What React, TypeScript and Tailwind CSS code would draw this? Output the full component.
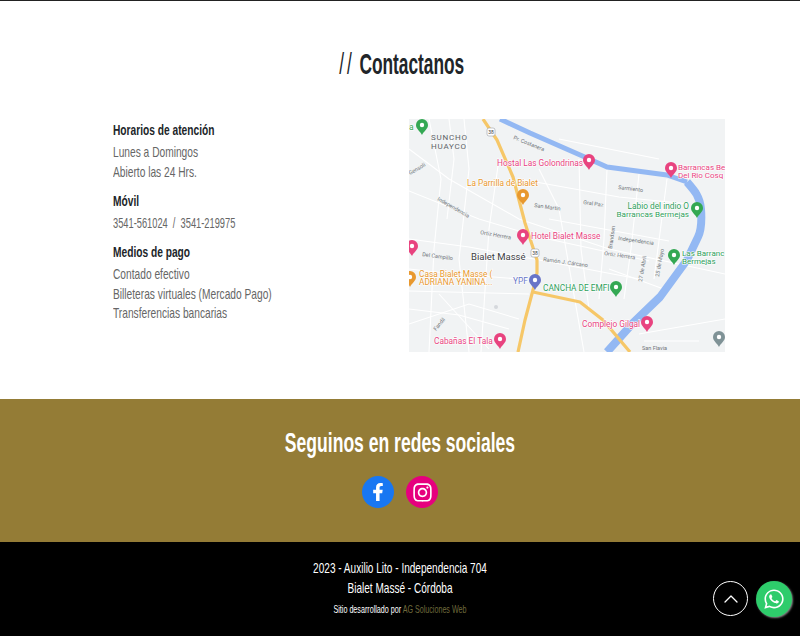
import { FaFacebookF, FaInstagram, FaWhatsapp } from 'react-icons/fa';
import { FiChevronUp } from 'react-icons/fi';

const hours = ['Lunes a Domingos', 'Abierto las 24 Hrs.'];
const payments = ['Contado efectivo', 'Billeteras virtuales (Mercado Pago)', 'Transferencias bancarias'];

const streets = [
  'M0 30 L40 60 L110 100 L200 130 L316 155',
  'M0 72 L70 100 L130 118 L240 142',
  'M0 120 L60 128 L125 140 L230 160',
  'M0 172 L120 175',
  'M20 0 L32 60 L25 130 L20 233',
  'M55 0 L60 50 L50 140 L60 233',
  'M90 40 L80 110 L72 233',
  'M130 50 L150 90 L175 233',
  'M170 40 L172 130 L180 190',
  'M198 50 L195 120 L190 180',
  'M230 55 L222 130 L215 180',
  'M258 60 L245 160',
  'M0 205 L60 185 L110 200',
  'M30 175 L80 230',
  'M110 60 L210 78 L280 85',
  'M230 215 L316 200',
  'M235 222 L290 222',
  'M0 150 L45 155 L110 160',
  'M0 190 L50 196 L100 210',
  'M40 0 L45 40 L38 100',
  'M150 20 L250 40',
  'M140 100 L260 122',
  'M200 150 L260 172',
];

const pins = [
  { x: 13, y: 6, c: '#34a853' },
  { x: 180, y: 41, c: '#e8437f' },
  { x: 262, y: 49, c: '#e8437f' },
  { x: 114, y: 76, c: '#e8982e' },
  { x: 288, y: 89, c: '#34a853' },
  { x: 114, y: 116, c: '#e8437f' },
  { x: 3, y: 127, c: '#e8437f' },
  { x: 265, y: 136, c: '#34a853' },
  { x: 1, y: 158, c: '#e8982e' },
  { x: 126, y: 161, c: '#6874c8' },
  { x: 207, y: 168, c: '#34a853' },
  { x: 238, y: 203, c: '#e8437f' },
  { x: 91, y: 220, c: '#e8437f' },
  { x: 310, y: 218, c: '#7f9296' },
];

const labels = [
  { t: 'a', x: 0, y: 11, c: '#34a853', s: 8.5 },
  { t: 'Hostal Las Golondrinas', x: 88, y: 47, c: '#e8437f', s: 8.3 },
  { t: 'Barrancas Be', x: 269, y: 51, c: '#e8437f', s: 8 },
  { t: 'Del Rio Cosq', x: 269, y: 59, c: '#e8437f', s: 8 },
  { t: 'La Parrilla de Bialet', x: 58, y: 67, c: '#e8982e', s: 8.3 },
  { t: 'Labio del indio O', x: 280, y: 90, c: '#2e9e5b', s: 8.3, end: true },
  { t: 'Barrancas Bermejas', x: 280, y: 98, c: '#2e9e5b', s: 8.1, end: true },
  { t: 'Hotel Bialet Masse', x: 122, y: 120, c: '#e8437f', s: 8.3 },
  { t: 'Las Barranc', x: 273, y: 137, c: '#2e9e5b', s: 8 },
  { t: 'Bermejas', x: 273, y: 145, c: '#2e9e5b', s: 8 },
  { t: 'Casa Bialet Masse (', x: 10, y: 158, c: '#e8982e', s: 8.3 },
  { t: 'ADRIANA YANINA...', x: 10, y: 166, c: '#e8982e', s: 8.3 },
  { t: 'YPF', x: 104, y: 165, c: '#6874c8', s: 8.3 },
  { t: 'CANCHA DE EMFI', x: 134, y: 172, c: '#2e9e5b', s: 8.3 },
  { t: 'Complejo Gilgal', x: 173, y: 208, c: '#e8437f', s: 8.3 },
  { t: 'Cabañas El Tala', x: 25, y: 225, c: '#e8437f', s: 8.3 },
  { t: 'Bialet Massé', x: 62, y: 141, c: '#3c4043', s: 9.5 },
];

const small = [
  { t: 'Pr. Costanera', x: 104, y: 20, r: 22 },
  { t: 'Gensoli', x: 1, y: 56, r: -30 },
  { t: 'Sarmiento', x: 209, y: 70, r: 7 },
  { t: 'Gral Paz', x: 174, y: 85, r: 8 },
  { t: 'San Martin', x: 125, y: 88, r: 8 },
  { t: 'Independencia', x: 28, y: 81, r: 30 },
  { t: 'Ortiz Herrera', x: 71, y: 115, r: 10 },
  { t: 'Independencia', x: 209, y: 121, r: 8 },
  { t: 'Brandsen', x: 203, y: 130, r: -82 },
  { t: 'Del Campillo', x: 13, y: 137, r: 8 },
  { t: 'Ramón J. Cárcano', x: 134, y: 142, r: 8 },
  { t: 'Ortiz Herrera', x: 195, y: 136, r: 8 },
  { t: '27 de Abril', x: 233, y: 163, r: -80 },
  { t: '25 de Mayo', x: 250, y: 158, r: -80 },
  { t: 'Fandil', x: 27, y: 212, r: -50 },
  { t: 'San Flavia', x: 233, y: 231, r: 0 },
];

const MapView = () => (
  <div className="w-[316px] h-[233px] shrink-0 overflow-hidden bg-[#f1f3f4]">
    <svg width="316" height="233" viewBox="0 0 316 233" fontFamily="Roboto, sans-serif">
      {streets.map((d) => (
        <path key={d} d={d} fill="none" stroke="#fff" strokeWidth="1.1" />
      ))}
      <path
        d="M91 0 L121 14 L178 39 L198 48 L258 56 L278 63"
        fill="none"
        stroke="#93b8f3"
        strokeWidth="5"
        strokeLinejoin="round"
      />
      <path
        d="M278 63 C286 72 291 78 292 90 C293 104 292 112 289 118 L278 141 L251 178 L224 204 L198 233"
        fill="none"
        stroke="#93b8f3"
        strokeWidth="8"
        strokeLinejoin="round"
      />
      <path
        d="M74 0 L88 21 L104 58 L116 104 L128 141 L128 154 L124 171 L116 201 L109 233 M124 173 L171 183 L194 201 L221 233"
        fill="none"
        stroke="#f6c768"
        strokeWidth="3.2"
        strokeLinejoin="round"
      />
      {[
        [82, 13],
        [126, 134],
      ].map(([x, y]) => (
        <g key={x}>
          <rect x={x - 4} y={y - 4} width="8" height="8" rx="2" fill="#fff" stroke="#9aa0a6" strokeWidth="0.6" />
          <text x={x} y={y + 2} fontSize="5" textAnchor="middle" fill="#3c4043">
            38
          </text>
        </g>
      ))}
      <circle cx="87" cy="188" r="2" fill="#d5d8dc" />
      <text x="22" y="21" fontSize="8" letterSpacing="0.8" fill="#5f6368">
        SUNCHO
      </text>
      <text x="22" y="30" fontSize="8" letterSpacing="0.8" fill="#5f6368">
        HUAYCO
      </text>
      {small.map((l) => (
        <text key={l.t + l.x} x={l.x} y={l.y} fontSize="5.5" fill="#70757a" transform={`rotate(${l.r} ${l.x} ${l.y})`}>
          {l.t}
        </text>
      ))}
      {pins.map((p) => (
        <g key={p.x + '-' + p.y} transform={`translate(${p.x} ${p.y})`}>
          <path d="M0 10 C-2 6 -6 4 -6 0 A6 6 0 1 1 6 0 C6 4 2 6 0 10Z" fill={p.c} />
          <circle r="2.2" fill="#fff" />
        </g>
      ))}
      {labels.map((l) => (
        <text
          key={l.t + l.x}
          x={l.x}
          y={l.y}
          fontSize={l.s}
          fill={l.c}
          stroke="#fff"
          strokeWidth="1.2"
          paintOrder="stroke"
          textAnchor={l.end ? 'end' : 'start'}
        >
          {l.t}
        </text>
      ))}
    </svg>
  </div>
);

export default function App() {
  return (
    <div className="relative h-[636px] overflow-hidden bg-white font-['Liberation_Sans',sans-serif]">
      <div className="h-px bg-[#222]" />
      <section className="h-[398px] pt-[47px]">
        <h1 className="origin-center scale-x-[.577] pl-[6px] text-center text-[30px] leading-[32px] text-[#212529]">
          <span className="tracking-[5px]">//</span> <b>Contactanos</b>
        </h1>
        <div className="mt-[39px] ml-[113px] flex w-[612px] justify-between">
          <div className="origin-left scale-x-[.68] text-[15px] leading-[20px] text-[#666]">
            <h3 className="mt-px font-bold text-[#212529]">Horarios de atención</h3>
            <div className="mt-[2px]">
              {hours.map((h) => (
                <p key={h}>{h}</p>
              ))}
            </div>
            <h3 className="mt-[9px] font-bold text-[#212529]">Móvil</h3>
            <p className="mt-[2px] origin-left scale-x-[.91]">3541-561024 &nbsp;/&nbsp; 3541-219975</p>
            <h3 className="mt-[9px] font-bold text-[#212529]">Medios de pago</h3>
            <div className="mt-[2px] leading-[19.6px]">
              {payments.map((p) => (
                <p key={p}>{p}</p>
              ))}
            </div>
          </div>
          <MapView />
        </div>
      </section>
      <section className="h-[143px] bg-[#947c36] pt-[29px] text-center">
        <h2 className="origin-center scale-x-[.627] text-[28px] font-bold leading-[30px] text-white">
          Seguinos en redes sociales
        </h2>
        <div className="mt-[18px] flex justify-center gap-3">
          <a className="flex h-8 w-8 items-center justify-center rounded-full bg-[#1877f2] text-[18px] text-white">
            <FaFacebookF />
          </a>
          <a className="flex h-8 w-8 items-center justify-center rounded-full bg-[#e6007e] text-[21px] text-white">
            <FaInstagram />
          </a>
        </div>
      </section>
      <footer className="h-[95px] bg-black pt-[16px] text-center text-[15px] leading-[20px] text-white">
        <p className="origin-center scale-x-[.67]">2023 - Auxilio Lito - Independencia 704</p>
        <p className="origin-center scale-x-[.67]">Bialet Massé - Córdoba</p>
        <p className="mt-px origin-center scale-x-[.65] text-[11px] leading-[20px]">
          Sitio desarrollado por <a className="text-[#6f6a3c]">AG Soluciones Web</a>
        </p>
      </footer>
      <button className="absolute left-[713px] top-[581px] flex h-[35px] w-[35px] items-center justify-center rounded-full border border-white text-[24px] text-white">
        <FiChevronUp strokeWidth={1.3} />
      </button>
      <a className="absolute left-[756px] top-[581px] flex h-[36px] w-[36px] items-center justify-center rounded-full bg-[#2ecc6b] text-[22px] text-white shadow-[1px_1px_2px_#888]">
        <FaWhatsapp />
      </a>
    </div>
  );
}
